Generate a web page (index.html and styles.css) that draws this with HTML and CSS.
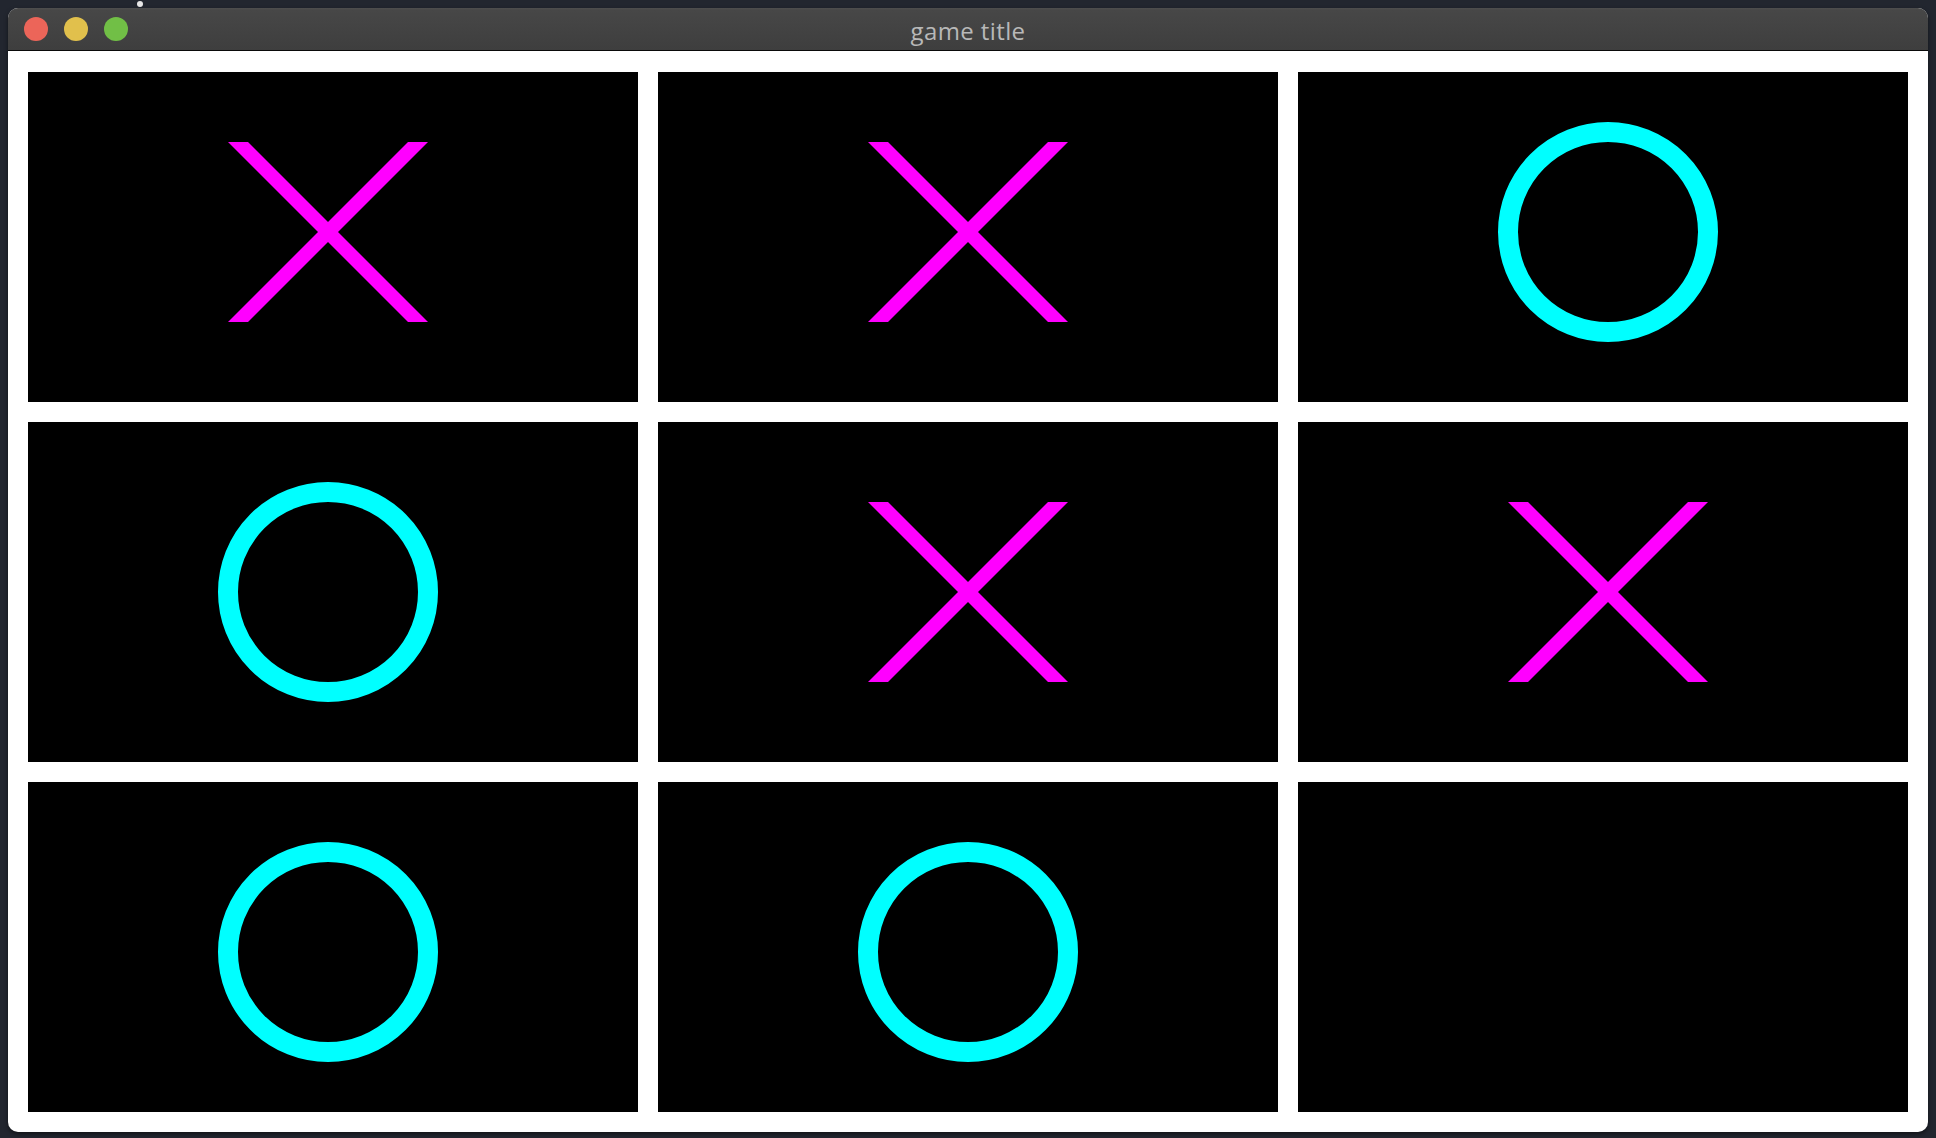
FILE: index.html
```html
<!DOCTYPE html>
<html>
<head>
<meta charset="utf-8">
<title>game title</title>
<link rel="stylesheet" href="styles.css">
</head>
<body>
<div class="desk-dot"></div>
<div class="window">
  <div class="titlebar">
    <div class="lights">
      <span class="light red"></span>
      <span class="light yellow"></span>
      <span class="light green"></span>
    </div>
    <div class="title">game title</div>
  </div>
  <div class="board">
    <div class="cell r1 c1"><svg class="x" viewBox="0 0 200 180"><polygon points="0,0 20,0 200,180 180,180"/><polygon points="180,0 200,0 20,180 0,180"/></svg></div>
    <div class="cell r1 c2"><svg class="x" viewBox="0 0 200 180"><polygon points="0,0 20,0 200,180 180,180"/><polygon points="180,0 200,0 20,180 0,180"/></svg></div>
    <div class="cell r1 c3"><svg class="o" viewBox="0 0 220 220"><circle cx="110" cy="110" r="100"/></svg></div>
    <div class="cell r2 c1"><svg class="o" viewBox="0 0 220 220"><circle cx="110" cy="110" r="100"/></svg></div>
    <div class="cell r2 c2"><svg class="x" viewBox="0 0 200 180"><polygon points="0,0 20,0 200,180 180,180"/><polygon points="180,0 200,0 20,180 0,180"/></svg></div>
    <div class="cell r2 c3"><svg class="x" viewBox="0 0 200 180"><polygon points="0,0 20,0 200,180 180,180"/><polygon points="180,0 200,0 20,180 0,180"/></svg></div>
    <div class="cell r3 c1"><svg class="o" viewBox="0 0 220 220"><circle cx="110" cy="110" r="100"/></svg></div>
    <div class="cell r3 c2"><svg class="o" viewBox="0 0 220 220"><circle cx="110" cy="110" r="100"/></svg></div>
    <div class="cell r3 c3"></div>
  </div>
</div>
</body>
</html>
```
FILE: styles.css
```css
html, body {
  margin: 0;
  padding: 0;
  background: #22262f;
}
body {
  padding: 8px;
  width: 1920px;
  height: 1122px;
  overflow: hidden;
  font-family: "Open Sans", "Liberation Sans", sans-serif;
}
.desk-dot {
  position: absolute;
  left: 137px;
  top: 1px;
  width: 6px;
  height: 6px;
  border-radius: 50%;
  background: #e6e6e6;
}
.window {
  width: 1920px;
  height: 1124px;
  border-radius: 10px;
  overflow: hidden;
  background: #ffffff;
  display: flex;
  flex-direction: column;
  box-shadow: 0 2px 4px rgba(0,0,0,0.5);
}
.titlebar {
  height: 42px;
  flex: none;
  background: linear-gradient(#4e4e4e 0, #474747 2px, #3e3e3e 100%);
  border-top: 1px solid #6a6a6a;
  border-bottom: 1px solid #0a0a0a;
  box-sizing: content-box;
  margin-top: -1px;
  display: flex;
  align-items: center;
  position: relative;
}
.lights {
  display: flex;
  gap: 16px;
  padding-left: 16px;
}
.light {
  width: 24px;
  height: 24px;
  border-radius: 50%;
  display: block;
}
.red { background: #ec6559; }
.yellow { background: #e1c04c; }
.green { background: #71bf46; }
.title {
  position: absolute;
  left: 0;
  right: 0;
  top: 2px;
  bottom: 0;
  display: flex;
  align-items: center;
  justify-content: center;
  color: #b8b8b8;
  font-size: 24px;
  letter-spacing: 0.4px;
}
.board {
  flex: 1;
  padding: 21px 20px 20px 20px;
  display: grid;
  grid-template-columns: 610px 620px 610px;
  grid-template-rows: 330px 340px 330px;
  gap: 20px;
}
.cell {
  background: #000000;
  display: flex;
  align-items: center;
  justify-content: center;
}
.x {
  width: 200px;
  height: 180px;
  fill: #ff00ff;
}
.o {
  width: 220px;
  height: 220px;
  fill: none;
  stroke: #00ffff;
  stroke-width: 20;
}
.c1 svg { margin-left: -11px; }
.c3 svg { margin-left: 10px; }
.r1 svg { margin-top: -10px; }
.r3 svg { margin-top: 10px; }
```
